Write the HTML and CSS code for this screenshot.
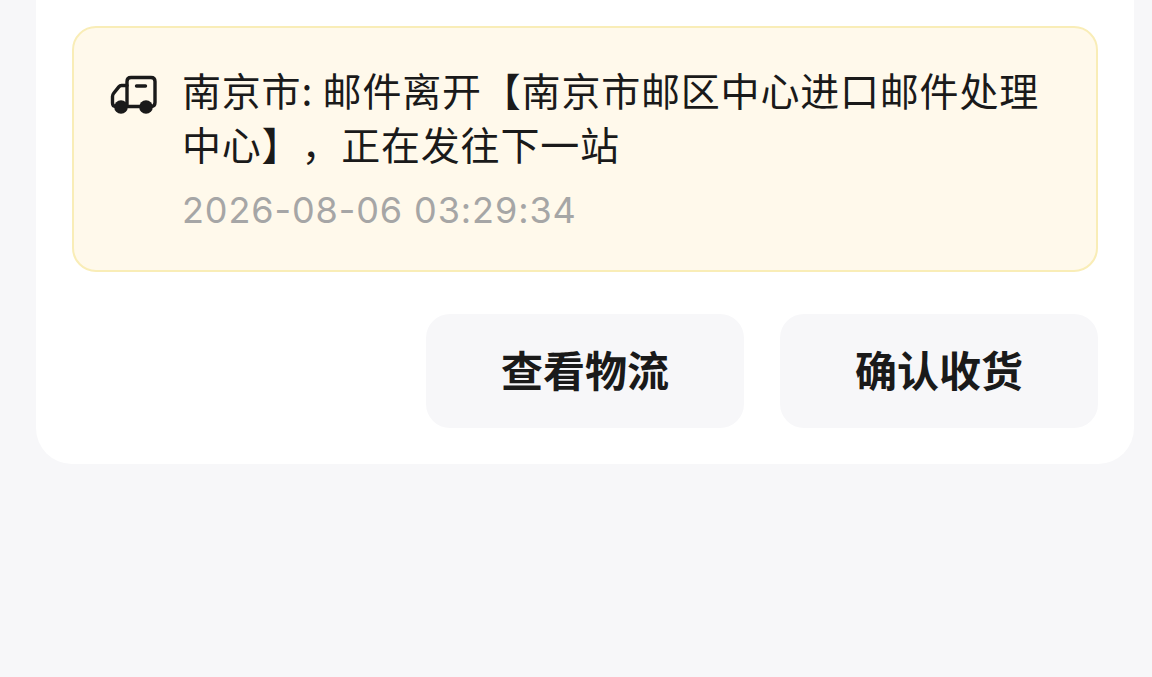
FILE: index.html
```html
<!DOCTYPE html>
<html lang="zh-CN">
<head>
    <meta charset="UTF-8">
    <meta name="viewport" content="width=device-width, initial-scale=1.0">
    <title>订单详情</title>
    <link rel="stylesheet" href="styles.css">
</head>
<body>
    <div class="order-card">
        <div class="track-box">
            <svg class="track-icon" width="48" height="42" viewBox="0 0 48 42" fill="none">
                <path d="M17 11.500H11.500C10.300 11.500 9.500 12 8.800 12.900L3.700 19.300C3 20.200 2.500 21.200 2.500 22.500V29C2.500 31 3.500 32.500 6 32.500" stroke="#1a1a1a" stroke-width="3.400" stroke-linecap="round" stroke-linejoin="round"/>
                <path d="M17 32.500V7.500C17 4.800 18.500 3.500 21 3.500H41C43.700 3.500 45 4.800 45 7.500V28.500C45 31.200 43.700 32.500 41 32.500H38M32 32.500H15" stroke="#1a1a1a" stroke-width="3.400" stroke-linecap="round" stroke-linejoin="round"/>
                <path d="M26.500 12H35.500" stroke="#1a1a1a" stroke-width="3.400" stroke-linecap="round"/>
                <circle cx="11" cy="33" r="6.800" fill="#1a1a1a"/>
                <circle cx="36" cy="33" r="6.800" fill="#1a1a1a"/>
            </svg>
            <div class="track-info">
                <div class="track-text">南京市: 邮件离开【南京市邮区中心进口邮件处理中心】，正在发往下一站</div>
                <div class="track-time">2026-08-06 03:29:34</div>
            </div>
        </div>
        <div class="actions">
            <button class="action-btn">查看物流</button>
            <button class="action-btn">确认收货</button>
        </div>
    </div>
</body>
</html>
```

FILE: styles.css
```css
html, body {
    height: 100%;
}
body {
    margin: 0;
    padding: 0 18px 0 36px;
    background: #f7f7f9;
    overflow: hidden;
    font-family: "Inter", "Noto Sans CJK SC", sans-serif;
    color: #1a1a1a;
}
.order-card {
    margin-top: -40px;
    padding: 66px 36px 36px;
    background: #fff;
    border-radius: 36px;
}
.track-box {
    display: flex;
    gap: 24px;
    height: 246px;
    box-sizing: border-box;
    padding: 34px 36px 0;
    background: #fff9eb;
    border: 2px solid #f9edb7;
    border-radius: 24px;
}
.track-icon {
    flex-shrink: 0;
    margin-top: 12px;
}
.track-text {
    font-family: "Noto Sans CJK SC", sans-serif;
    font-size: 39px;
    line-height: 54px;
    letter-spacing: 0.8px;
    text-spacing-trim: space-all;
}
.track-time {
    margin-top: 16px;
    font-size: 36px;
    line-height: 48px;
    letter-spacing: 0.9px;
    color: #a6a6a6;
}
.actions {
    display: flex;
    justify-content: flex-end;
    gap: 36px;
    margin-top: 42px;
}
.action-btn {
    width: 318px;
    height: 114px;
    padding: 0 0 6px;
    border: none;
    border-radius: 24px;
    background: #f7f7f9;
    color: #1a1a1a;
    font-family: "Noto Sans CJK SC", sans-serif;
    font-size: 42px;
    font-weight: 700;
}
```
